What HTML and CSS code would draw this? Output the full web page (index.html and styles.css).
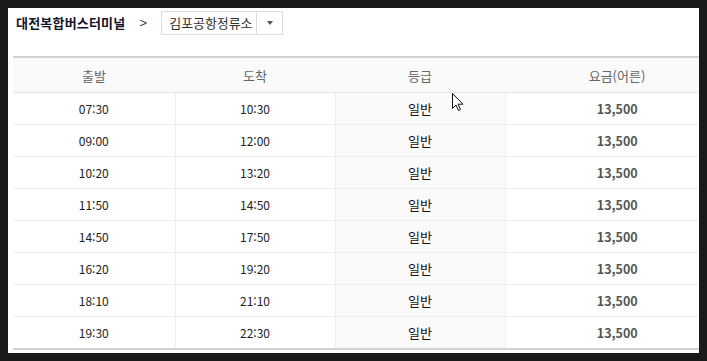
FILE: index.html
```html
<!DOCTYPE html>
<html lang="ko">
<head>
<meta charset="utf-8">
<link rel="stylesheet" href="styles.css">
</head>
<body>
<div class="panel">
  <div class="topbar">
    <h1 class="title">대전복합버스터미널</h1>
    <span class="chev">&gt;</span>
    <div class="select">
      <span class="select-text">김포공항정류소</span>
      <span class="select-btn"><span class="tri"></span></span>
    </div>
  </div>
  <div class="table-wrap">
    <table class="tbl">
      <colgroup>
        <col class="c1"><col class="c2"><col class="c3"><col class="c4">
      </colgroup>
      <thead>
        <tr><th>출발</th><th>도착</th><th>등급</th><th>요금(어른)</th></tr>
      </thead>
      <tbody>
        <tr><td>07:30</td><td>10:30</td><td class="grade">일반</td><td class="fare">13,500</td></tr>
        <tr><td>09:00</td><td>12:00</td><td class="grade">일반</td><td class="fare">13,500</td></tr>
        <tr><td>10:20</td><td>13:20</td><td class="grade">일반</td><td class="fare">13,500</td></tr>
        <tr><td>11:50</td><td>14:50</td><td class="grade">일반</td><td class="fare">13,500</td></tr>
        <tr><td>14:50</td><td>17:50</td><td class="grade">일반</td><td class="fare">13,500</td></tr>
        <tr><td>16:20</td><td>19:20</td><td class="grade">일반</td><td class="fare">13,500</td></tr>
        <tr><td>18:10</td><td>21:10</td><td class="grade">일반</td><td class="fare">13,500</td></tr>
        <tr><td>19:30</td><td>22:30</td><td class="grade">일반</td><td class="fare">13,500</td></tr>
      </tbody>
    </table>
  </div>
  <svg class="cursor" width="12" height="19" viewBox="0 0 12 19">
    <path d="M0.5 0.5 L0.5 15.5 L4 12 L6.5 17.5 L8.5 16.5 L6 11.2 L11 11.2 Z" fill="#fff" stroke="#111" stroke-width="1"/>
  </svg>
</div>
</body>
</html>
```
FILE: styles.css
```css
html, body {
  margin: 0;
  padding: 0;
}
body {
  background: #1a1a1a;
  padding: 8px 8px 8px 8px;
  font-family: "Noto Sans CJK KR", "Noto Sans", sans-serif;
}
.panel {
  position: relative;
  background: #fff;
  width: 691px;
  height: 345px;
  overflow: hidden;
}
.topbar {
  display: flex;
  align-items: center;
  height: 24px;
  padding: 3px 0 0 8px;
}
.title {
  margin: 0;
  font-size: 13px;
  font-weight: bold;
  color: #14142a;
  letter-spacing: 0.2px;
  line-height: 24px;
}
.chev {
  margin-left: 13px;
  font-size: 13px;
  color: #444;
  font-family: "DejaVu Sans", sans-serif;
  transform: scaleX(0.8);
  line-height: 24px;
}
.select {
  margin-left: 12px;
  display: flex;
  height: 22px;
  border: 1px solid #dcdcdc;
  width: 120px;
}
.select-text {
  flex: 1;
  font-size: 13px;
  color: #333;
  line-height: 22px;
  padding-left: 7px;
  letter-spacing: -0.1px;
  border-right: 1px solid #dcdcdc;
}
.select-btn {
  width: 25px;
  display: flex;
  align-items: center;
  justify-content: center;
}
.tri {
  width: 0;
  height: 0;
  border-left: 3.5px solid transparent;
  border-right: 3.5px solid transparent;
  border-top: 4px solid #555;
}
.table-wrap {
  margin: 21px 0 0 5px;
  width: 716px;
}
.tbl {
  width: 716px;
  table-layout: fixed;
  border-collapse: collapse;
  border-top: 2px solid #d2d2d2;
  border-bottom: 2px solid #d2d2d2;
}
.c1 { width: 162px; }
.c2 { width: 160px; }
.c3 { width: 170px; }
.c4 { width: 224px; }
.tbl th {
  height: 34px;
  padding: 0;
  background: #fafafa;
  font-weight: normal;
  font-size: 13px;
  color: #666;
  border-bottom: 1px solid #e4e4e4;
}
.tbl td {
  height: 31px;
  padding: 0;
  text-align: center;
  font-size: 12px;
  color: #222;
  border-bottom: 1px solid #eee;
  border-left: 1px solid #eee;
}
.tbl td:first-child {
  border-left: none;
}
.tbl td.grade {
  background: #fafafa;
  font-size: 13px;
  color: #111;
}
.tbl td.fare {
  font-weight: bold;
  color: #555;
  font-size: 12.5px;
}
.cursor {
  position: absolute;
  left: 444px;
  top: 85px;
}
```
